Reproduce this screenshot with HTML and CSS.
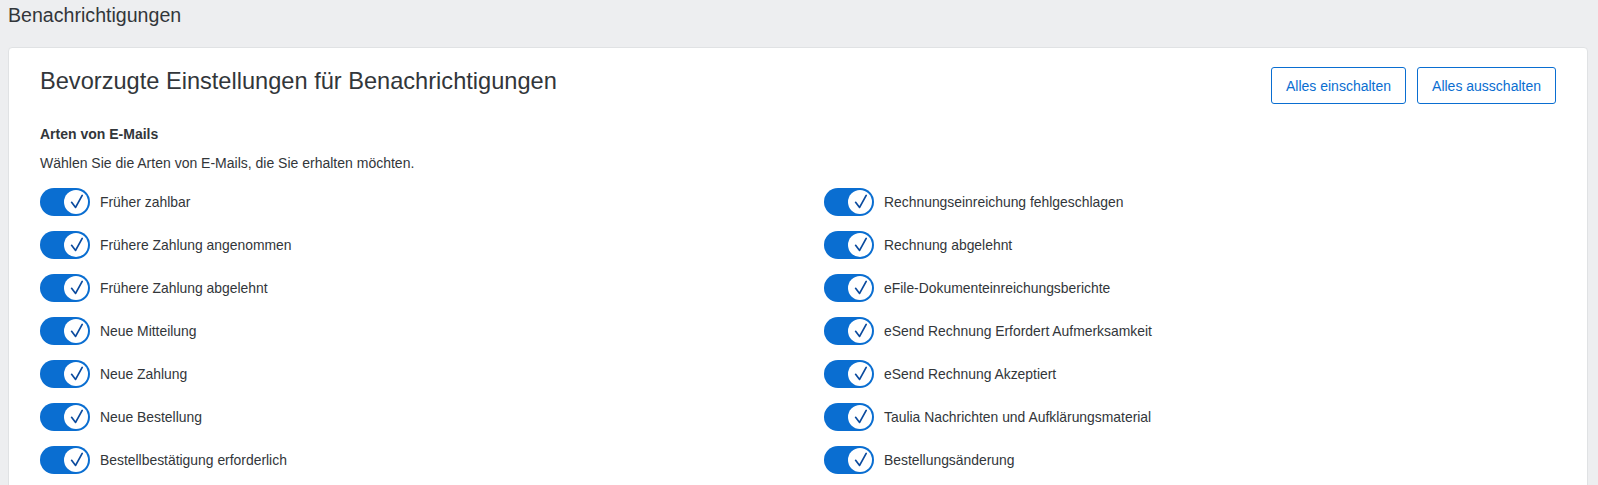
FILE: index.html
```html
<!DOCTYPE html>
<html lang="de">
<head>
<meta charset="utf-8">
<title>Benachrichtigungen</title>
<link rel="stylesheet" href="styles.css">
</head>
<body>
<div class="page">
  <h1 class="page-title">Benachrichtigungen</h1>
  <section class="card">
    <div class="card-header">
      <h2 class="card-title">Bevorzugte Einstellungen für Benachrichtigungen</h2>
      <div class="actions">
        <button class="btn">Alles einschalten</button>
        <button class="btn">Alles ausschalten</button>
      </div>
    </div>
    <h3 class="section-title">Arten von E-Mails</h3>
    <p class="section-desc">Wählen Sie die Arten von E-Mails, die Sie erhalten möchten.</p>
    <div class="columns">
      <ul class="list">
        <li class="row"><span class="switch"><span class="knob"><svg viewBox="0 0 24 24"><path d="M7.6 12.3 L11.6 17.4 L18.2 5.4"/></svg></span></span><span class="label">Früher zahlbar</span></li>
        <li class="row"><span class="switch"><span class="knob"><svg viewBox="0 0 24 24"><path d="M7.6 12.3 L11.6 17.4 L18.2 5.4"/></svg></span></span><span class="label">Frühere Zahlung angenommen</span></li>
        <li class="row"><span class="switch"><span class="knob"><svg viewBox="0 0 24 24"><path d="M7.6 12.3 L11.6 17.4 L18.2 5.4"/></svg></span></span><span class="label">Frühere Zahlung abgelehnt</span></li>
        <li class="row"><span class="switch"><span class="knob"><svg viewBox="0 0 24 24"><path d="M7.6 12.3 L11.6 17.4 L18.2 5.4"/></svg></span></span><span class="label">Neue Mitteilung</span></li>
        <li class="row"><span class="switch"><span class="knob"><svg viewBox="0 0 24 24"><path d="M7.6 12.3 L11.6 17.4 L18.2 5.4"/></svg></span></span><span class="label">Neue Zahlung</span></li>
        <li class="row"><span class="switch"><span class="knob"><svg viewBox="0 0 24 24"><path d="M7.6 12.3 L11.6 17.4 L18.2 5.4"/></svg></span></span><span class="label">Neue Bestellung</span></li>
        <li class="row"><span class="switch"><span class="knob"><svg viewBox="0 0 24 24"><path d="M7.6 12.3 L11.6 17.4 L18.2 5.4"/></svg></span></span><span class="label">Bestellbestätigung erforderlich</span></li>
      </ul>
      <ul class="list">
        <li class="row"><span class="switch"><span class="knob"><svg viewBox="0 0 24 24"><path d="M7.6 12.3 L11.6 17.4 L18.2 5.4"/></svg></span></span><span class="label">Rechnungseinreichung fehlgeschlagen</span></li>
        <li class="row"><span class="switch"><span class="knob"><svg viewBox="0 0 24 24"><path d="M7.6 12.3 L11.6 17.4 L18.2 5.4"/></svg></span></span><span class="label">Rechnung abgelehnt</span></li>
        <li class="row"><span class="switch"><span class="knob"><svg viewBox="0 0 24 24"><path d="M7.6 12.3 L11.6 17.4 L18.2 5.4"/></svg></span></span><span class="label">eFile-Dokumenteinreichungsberichte</span></li>
        <li class="row"><span class="switch"><span class="knob"><svg viewBox="0 0 24 24"><path d="M7.6 12.3 L11.6 17.4 L18.2 5.4"/></svg></span></span><span class="label">eSend Rechnung Erfordert Aufmerksamkeit</span></li>
        <li class="row"><span class="switch"><span class="knob"><svg viewBox="0 0 24 24"><path d="M7.6 12.3 L11.6 17.4 L18.2 5.4"/></svg></span></span><span class="label">eSend Rechnung Akzeptiert</span></li>
        <li class="row"><span class="switch"><span class="knob"><svg viewBox="0 0 24 24"><path d="M7.6 12.3 L11.6 17.4 L18.2 5.4"/></svg></span></span><span class="label">Taulia Nachrichten und Aufklärungsmaterial</span></li>
        <li class="row"><span class="switch"><span class="knob"><svg viewBox="0 0 24 24"><path d="M7.6 12.3 L11.6 17.4 L18.2 5.4"/></svg></span></span><span class="label">Bestellungsänderung</span></li>
      </ul>
    </div>
  </section>
</div>
</body>
</html>
```

FILE: styles.css
```css
* { box-sizing: border-box; }

html, body {
  margin: 0;
  background: #edeef0;
  color: #32363a;
  font-family: "Liberation Sans", Arial, sans-serif;
}

.page {
  padding: 0 10px 0 8px;
}

.page-title {
  margin: 0 0 20px;
  padding-top: 3px;
  font-size: 19.6px;
  line-height: 24px;
  font-weight: normal;
  color: #32363a;
}

.card {
  background: #fff;
  border: 1px solid #e0e2e4;
  border-radius: 4px;
  padding: 19px 31px 40px 31px;
  min-height: 600px;
}

.card-header {
  display: flex;
  justify-content: space-between;
  align-items: flex-start;
}

.card-title {
  margin: 0;
  font-size: 23.6px;
  line-height: 28px;
  font-weight: normal;
  color: #32363a;
}

.actions {
  display: flex;
  gap: 11px;
}

.btn {
  height: 37px;
  padding: 0 14px;
  background: #fff;
  border: 1px solid #0a6ed1;
  border-radius: 3px;
  color: #0a6ed1;
  font-family: inherit;
  font-size: 14px;
}

.section-title {
  margin: 20px 0 0;
  font-size: 14px;
  line-height: 20px;
  font-weight: bold;
}

.section-desc {
  margin: 9px 0 0;
  font-size: 14px;
  line-height: 20px;
}

.columns {
  margin-top: 8px;
  display: grid;
  grid-template-columns: 784px 1fr;
}

.list {
  list-style: none;
  margin: 0;
  padding: 0;
}

.row {
  height: 42.9px;
  display: flex;
  align-items: center;
  gap: 10px;
  font-size: 13.9px;
}

.switch {
  width: 50px;
  height: 28px;
  border-radius: 14px;
  background: #0a6ed1;
  display: flex;
  align-items: center;
  justify-content: flex-end;
  padding-right: 2px;
  flex: none;
}

.knob {
  width: 24px;
  height: 24px;
  border-radius: 50%;
  background: #fff;
  display: block;
}

.knob svg {
  display: block;
  width: 24px;
  height: 24px;
  fill: none;
  stroke: #0a4a9e;
  stroke-width: 1.7;
  stroke-linecap: round;
  stroke-linejoin: round;
}
```
